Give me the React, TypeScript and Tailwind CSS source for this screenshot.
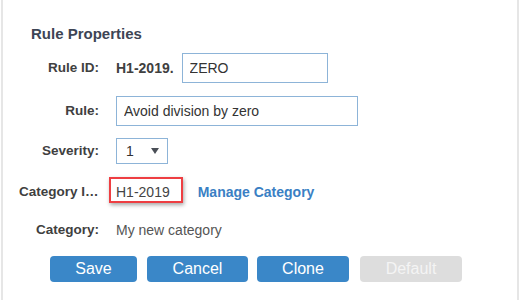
import React from "react"

function Row({ label, children, className }: { label: string; children: React.ReactNode; className: string }) {
  return (
    <div className={`flex items-center ${className}`}>
      <div className="ml-[16px] w-[80px] shrink-0 truncate text-right text-[13.5px] font-bold text-[#404040]">
        {label}
      </div>
      <div className="ml-[17px] flex items-center">{children}</div>
    </div>
  )
}

const buttons = [
  { label: "Save", cls: "w-[87px]", disabled: false },
  { label: "Cancel", cls: "ml-[10px] w-[101px]", disabled: false },
  { label: "Clone", cls: "ml-[9px] w-[92px]", disabled: false },
  { label: "Default", cls: "ml-[11px] w-[102px]", disabled: true },
]

export default function App() {
  return (
    <div className="h-[300px] w-[519px] bg-white font-['Liberation_Sans',Arial,sans-serif]">
      <div className="ml-px h-full w-[518px] border-x-2 border-[#e6e6e6] pt-[25px]">
        <h2 className="ml-[28px] text-[15px] font-bold leading-[17px] text-[#3d4555]">Rule Properties</h2>

        <Row label="Rule ID:" className="mt-[11px] h-[30px]">
          <span className="text-[14px] font-bold text-[#404040]">H1-2019.</span>
          <input
            readOnly
            value="ZERO"
            className="ml-[8px] h-[30px] w-[146px] border border-[#8db4d8] px-[7px] text-[14px] text-[#333] outline-none"
          />
        </Row>

        <Row label="Rule:" className="mt-[13px] h-[30px]">
          <input
            readOnly
            value="Avoid division by zero"
            className="h-[30px] w-[242px] border border-[#8db4d8] px-[7px] text-[14px] text-[#333] outline-none"
          />
        </Row>

        <Row label="Severity:" className="mt-[12px] h-[26px]">
          <div className="flex h-[26px] w-[52px] items-center justify-between border border-[#8db4d8] pl-[9px] pr-[8px] text-[14px] text-[#333]">
            <span>1</span>
            <svg width="8" height="6" viewBox="0 0 8 6" aria-hidden>
              <path d="M0 0 H8 L4 6 Z" fill="#4a4f57" />
            </svg>
          </div>
        </Row>

        <Row label="Category ID:" className="mt-[15px] h-[26px]">
          <span className="relative text-[14px] text-[#444]">
            H1-2019
            <span className="absolute -left-[7px] -top-[5px] h-[26px] w-[74px] border-2 border-[#ee3e42] shadow-[1px_2px_4px_rgba(0,0,0,0.35)]" />
          </span>
          <a className="ml-[28px] text-[14px] font-bold text-[#3a7fc4]">Manage Category</a>
        </Row>

        <Row label="Category:" className="mt-[12px] h-[26px]">
          <span className="text-[14px] text-[#555]">My new category</span>
        </Row>

        <div className="ml-[47px] mt-[13px] flex">
          {buttons.map((b) => (
            <button
              key={b.label}
              className={`h-[26px] rounded-[4px] text-[16px] leading-none ${b.cls} ${
                b.disabled ? "bg-[#dddddd] text-[#f4f4f4]" : "bg-[#3a87c8] text-white"
              }`}
            >
              {b.label}
            </button>
          ))}
        </div>
      </div>
    </div>
  )
}
